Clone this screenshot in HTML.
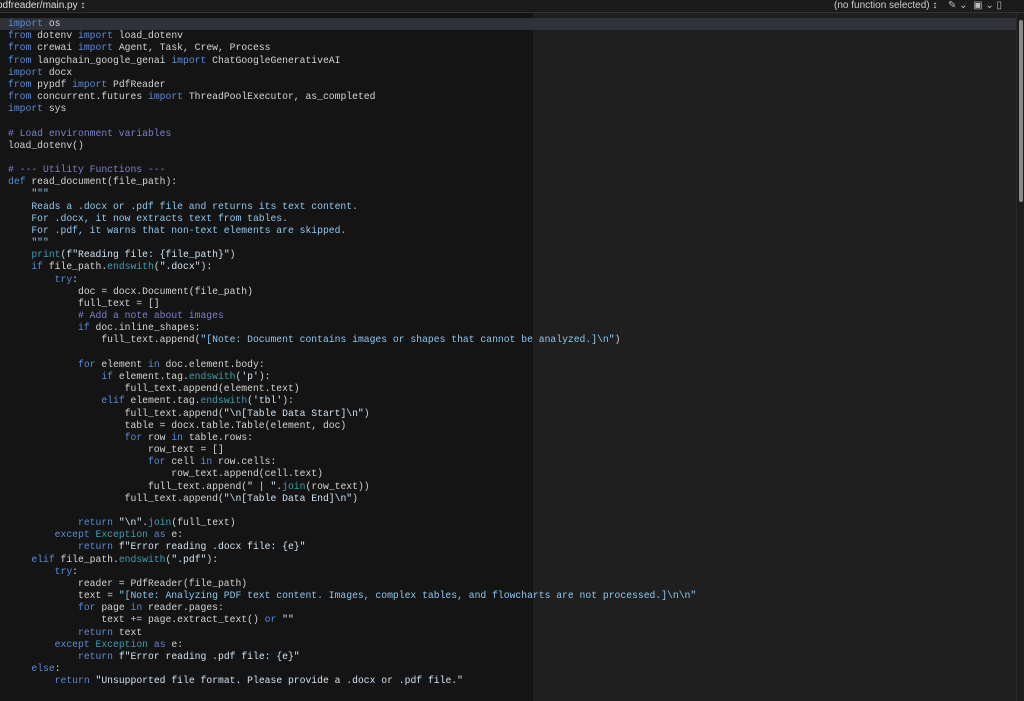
<!DOCTYPE html>
<html><head><meta charset="utf-8"><style>
body{margin:0;width:1024px;height:701px;overflow:hidden;background:#141414;font-family:"Liberation Sans",sans-serif;position:relative}
.top{position:absolute;left:0;top:0;width:1024px;height:12px;background:#1b1b1b;border-bottom:1px solid #333;color:#ddd;font-size:10px;line-height:12px}
.right{position:absolute;left:533px;top:13px;right:0;bottom:0;background:#1f1f1f}
.hl{position:absolute;left:0;top:18px;width:1016px;height:12px;background:#30323a}
.sb{position:absolute;left:1016px;top:13px;width:8px;bottom:0;background:#1c1c1c;border-left:1px solid #2a2a2a}
.thumb{position:absolute;left:1019px;top:20px;width:4px;height:182px;background:#8a8a8a;border-radius:2px}
pre{position:absolute;left:8px;top:18px;margin:0;font-family:"Liberation Mono",monospace;font-size:9.73px;line-height:12.17px;color:#d4d4d4}
.k{color:#5a8ad6}.s{color:#cfe3f2}.n{color:#8ec8ee}.c{color:#7b80c8}.f{color:#3a9fae}
</style></head><body>
<div class="top"><span style="position:absolute;left:-3px">pdfreader/main.py &#x2195;</span><span style="position:absolute;left:834px;color:#ccc">(no function selected) &#x2195;</span><span style="position:absolute;left:948px;color:#bbb">&#x270E; &#x2304;&nbsp;&nbsp;&#x25A3; &#x2304; &#x25AF;</span></div>
<div class="right"></div>
<div class="hl"></div>
<div class="sb"></div><div class="thumb"></div>
<pre><span class="k">import</span> os
<span class="k">from</span> dotenv <span class="k">import</span> load_dotenv
<span class="k">from</span> crewai <span class="k">import</span> Agent, Task, Crew, Process
<span class="k">from</span> langchain_google_genai <span class="k">import</span> ChatGoogleGenerativeAI
<span class="k">import</span> docx
<span class="k">from</span> pypdf <span class="k">import</span> PdfReader
<span class="k">from</span> concurrent.futures <span class="k">import</span> ThreadPoolExecutor, as_completed
<span class="k">import</span> sys

<span class="c"># Load environment variables</span>
load_dotenv()

<span class="c"># --- Utility Functions ---</span>
<span class="k">def</span> read_document(file_path):
    <span class="n">"""
    Reads a .docx or .pdf file and returns its text content.
    For .docx, it now extracts text from tables.
    For .pdf, it warns that non-text elements are skipped.
    """</span>
    <span class="f">print</span>(<span class="s">f"Reading file: {file_path}"</span>)
    <span class="k">if</span> file_path.<span class="f">endswith</span>(<span class="s">".docx"</span>):
        <span class="k">try</span>:
            doc = docx.Document(file_path)
            full_text = []
            <span class="c"># Add a note about images</span>
            <span class="k">if</span> doc.inline_shapes:
                full_text.append(<span class="n">"[Note: Document contains images or shapes that cannot be analyzed.]\n"</span>)

            <span class="k">for</span> element <span class="k">in</span> doc.element.body:
                <span class="k">if</span> element.tag.<span class="f">endswith</span>(<span class="s">'p'</span>):
                    full_text.append(element.text)
                <span class="k">elif</span> element.tag.<span class="f">endswith</span>(<span class="s">'tbl'</span>):
                    full_text.append(<span class="s">"\n[Table Data Start]\n"</span>)
                    table = docx.table.Table(element, doc)
                    <span class="k">for</span> row <span class="k">in</span> table.rows:
                        row_text = []
                        <span class="k">for</span> cell <span class="k">in</span> row.cells:
                            row_text.append(cell.text)
                        full_text.append(<span class="s">" | "</span>.<span class="f">join</span>(row_text))
                    full_text.append(<span class="s">"\n[Table Data End]\n"</span>)

            <span class="k">return</span> <span class="s">"\n"</span>.<span class="f">join</span>(full_text)
        <span class="k">except</span> <span class="f">Exception</span> <span class="k">as</span> e:
            <span class="k">return</span> <span class="s">f"Error reading .docx file: {e}"</span>
    <span class="k">elif</span> file_path.<span class="f">endswith</span>(<span class="s">".pdf"</span>):
        <span class="k">try</span>:
            reader = PdfReader(file_path)
            text = <span class="n">"[Note: Analyzing PDF text content. Images, complex tables, and flowcharts are not processed.]\n\n"</span>
            <span class="k">for</span> page <span class="k">in</span> reader.pages:
                text += page.extract_text() <span class="k">or</span> <span class="s">""</span>
            <span class="k">return</span> text
        <span class="k">except</span> <span class="f">Exception</span> <span class="k">as</span> e:
            <span class="k">return</span> <span class="s">f"Error reading .pdf file: {e}"</span>
    <span class="k">else</span>:
        <span class="k">return</span> <span class="s">"Unsupported file format. Please provide a .docx or .pdf file."</span>
</pre>
</body></html>
